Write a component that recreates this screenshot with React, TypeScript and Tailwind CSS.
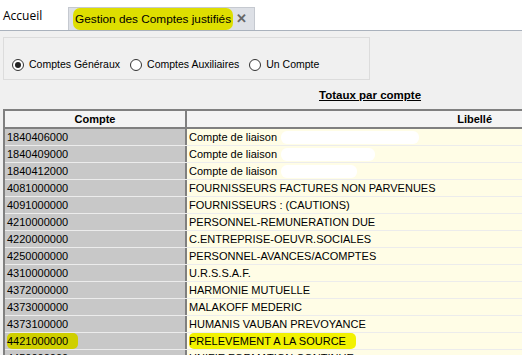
const rows: { code: string; label: string; blob?: number; hl?: boolean }[] = [
  { code: '1840406000', label: 'Compte de liaison', blob: 138 },
  { code: '1840409000', label: 'Compte de liaison', blob: 94 },
  { code: '1840412000', label: 'Compte de liaison', blob: 76 },
  { code: '4081000000', label: 'FOURNISSEURS FACTURES NON PARVENUES' },
  { code: '4091000000', label: 'FOURNISSEURS : (CAUTIONS)' },
  { code: '4210000000', label: 'PERSONNEL-REMUNERATION DUE' },
  { code: '4220000000', label: 'C.ENTREPRISE-OEUVR.SOCIALES' },
  { code: '4250000000', label: 'PERSONNEL-AVANCES/ACOMPTES' },
  { code: '4310000000', label: 'U.R.S.S.A.F.' },
  { code: '4372000000', label: 'HARMONIE MUTUELLE' },
  { code: '4373000000', label: 'MALAKOFF MEDERIC' },
  { code: '4373100000', label: 'HUMANIS VAUBAN PREVOYANCE' },
  { code: '4421000000', label: 'PRELEVEMENT A LA SOURCE', hl: true },
  { code: '4450000000', label: 'UNIFIE FORMATION CONTINUE' },
]

function Radio({ label, checked }: { label: string; checked?: boolean }) {
  return (
    <div className="flex items-center gap-[5px]">
      <span className="flex size-[12px] items-center justify-center rounded-full border border-[#333] bg-white">
        {checked && <span className="size-[6px] rounded-full bg-[#222]" />}
      </span>
      <span className="whitespace-nowrap">{label}</span>
    </div>
  )
}

export default function App() {
  return (
    <div className="flex h-[355px] w-[522px] flex-col overflow-hidden bg-[#f0f0f0] font-['Liberation_Sans',sans-serif] text-[11px] text-black">
      <div className="flex h-[31px] shrink-0 items-end border-b border-[#aab2bd] bg-white">
        <span className="mb-[5px] ml-[3px] w-[65px] font-['Open_Sans',sans-serif] text-[12px] text-black">
          Accueil
        </span>
        <div className="flex h-[23px] w-[187px] items-center border border-b-0 border-[#c5c9d0] bg-[#dde0e6] pl-[4px]">
          <span className="whitespace-nowrap rounded-[7px] bg-[#dede00] px-[2px] text-[11.8px] leading-[22px] text-black">
            Gestion des Comptes justifiés
          </span>
          <span className="ml-auto mr-[7px] text-[13px] font-bold text-[#666]">✕</span>
        </div>
      </div>

      <div className="ml-[3px] mt-[6px] flex h-[43px] w-[367px] shrink-0 items-end gap-[10px] border border-[#dcdcdc] pb-[6px] pl-[8px] text-[10.5px]">
        <Radio label="Comptes Généraux" checked />
        <Radio label="Comptes Auxiliaires" />
        <Radio label="Un Compte" />
      </div>

      <div className="flex h-[29px] shrink-0 items-center pl-[319px] pt-[3px]">
        <span className="text-[11.5px] font-bold underline">Totaux par compte</span>
      </div>

      <div className="ml-[3px] flex min-h-0 flex-1 flex-col border-l-2 border-t-2 border-[#808080] bg-white">
        <div className="flex h-[18px] shrink-0 border-b-2 border-[#808080] bg-[#f4f4f4] font-bold">
          <div className="flex w-[182px] items-center justify-center border-r-2 border-[#808080]">Compte</div>
          <div className="flex flex-1 items-center justify-end pr-[30px]">Libellé</div>
        </div>
        {rows.map((r) => (
          <div key={r.code} className="flex h-[17px] shrink-0 border-b border-[#ececec]">
            <div className="flex w-[182px] items-center border-r-2 border-[#808080] bg-[#c8c8c8] pl-[2px]">
              <span className={r.hl ? 'rounded-[5px] bg-[#cfcf00] pr-[10px]' : ''}>{r.code}</span>
            </div>
            <div className="flex flex-1 items-center bg-[#fffde6] pl-[2px]">
              <span className={r.hl ? 'rounded-[5px] bg-[#f2f200] pr-[10px]' : ''}>{r.label}</span>
              {r.blob && (
                <span
                  className="ml-[4px] h-[13px] rounded-[6px] bg-white"
                  style={{ width: r.blob }}
                />
              )}
            </div>
          </div>
        ))}
      </div>
    </div>
  )
}
